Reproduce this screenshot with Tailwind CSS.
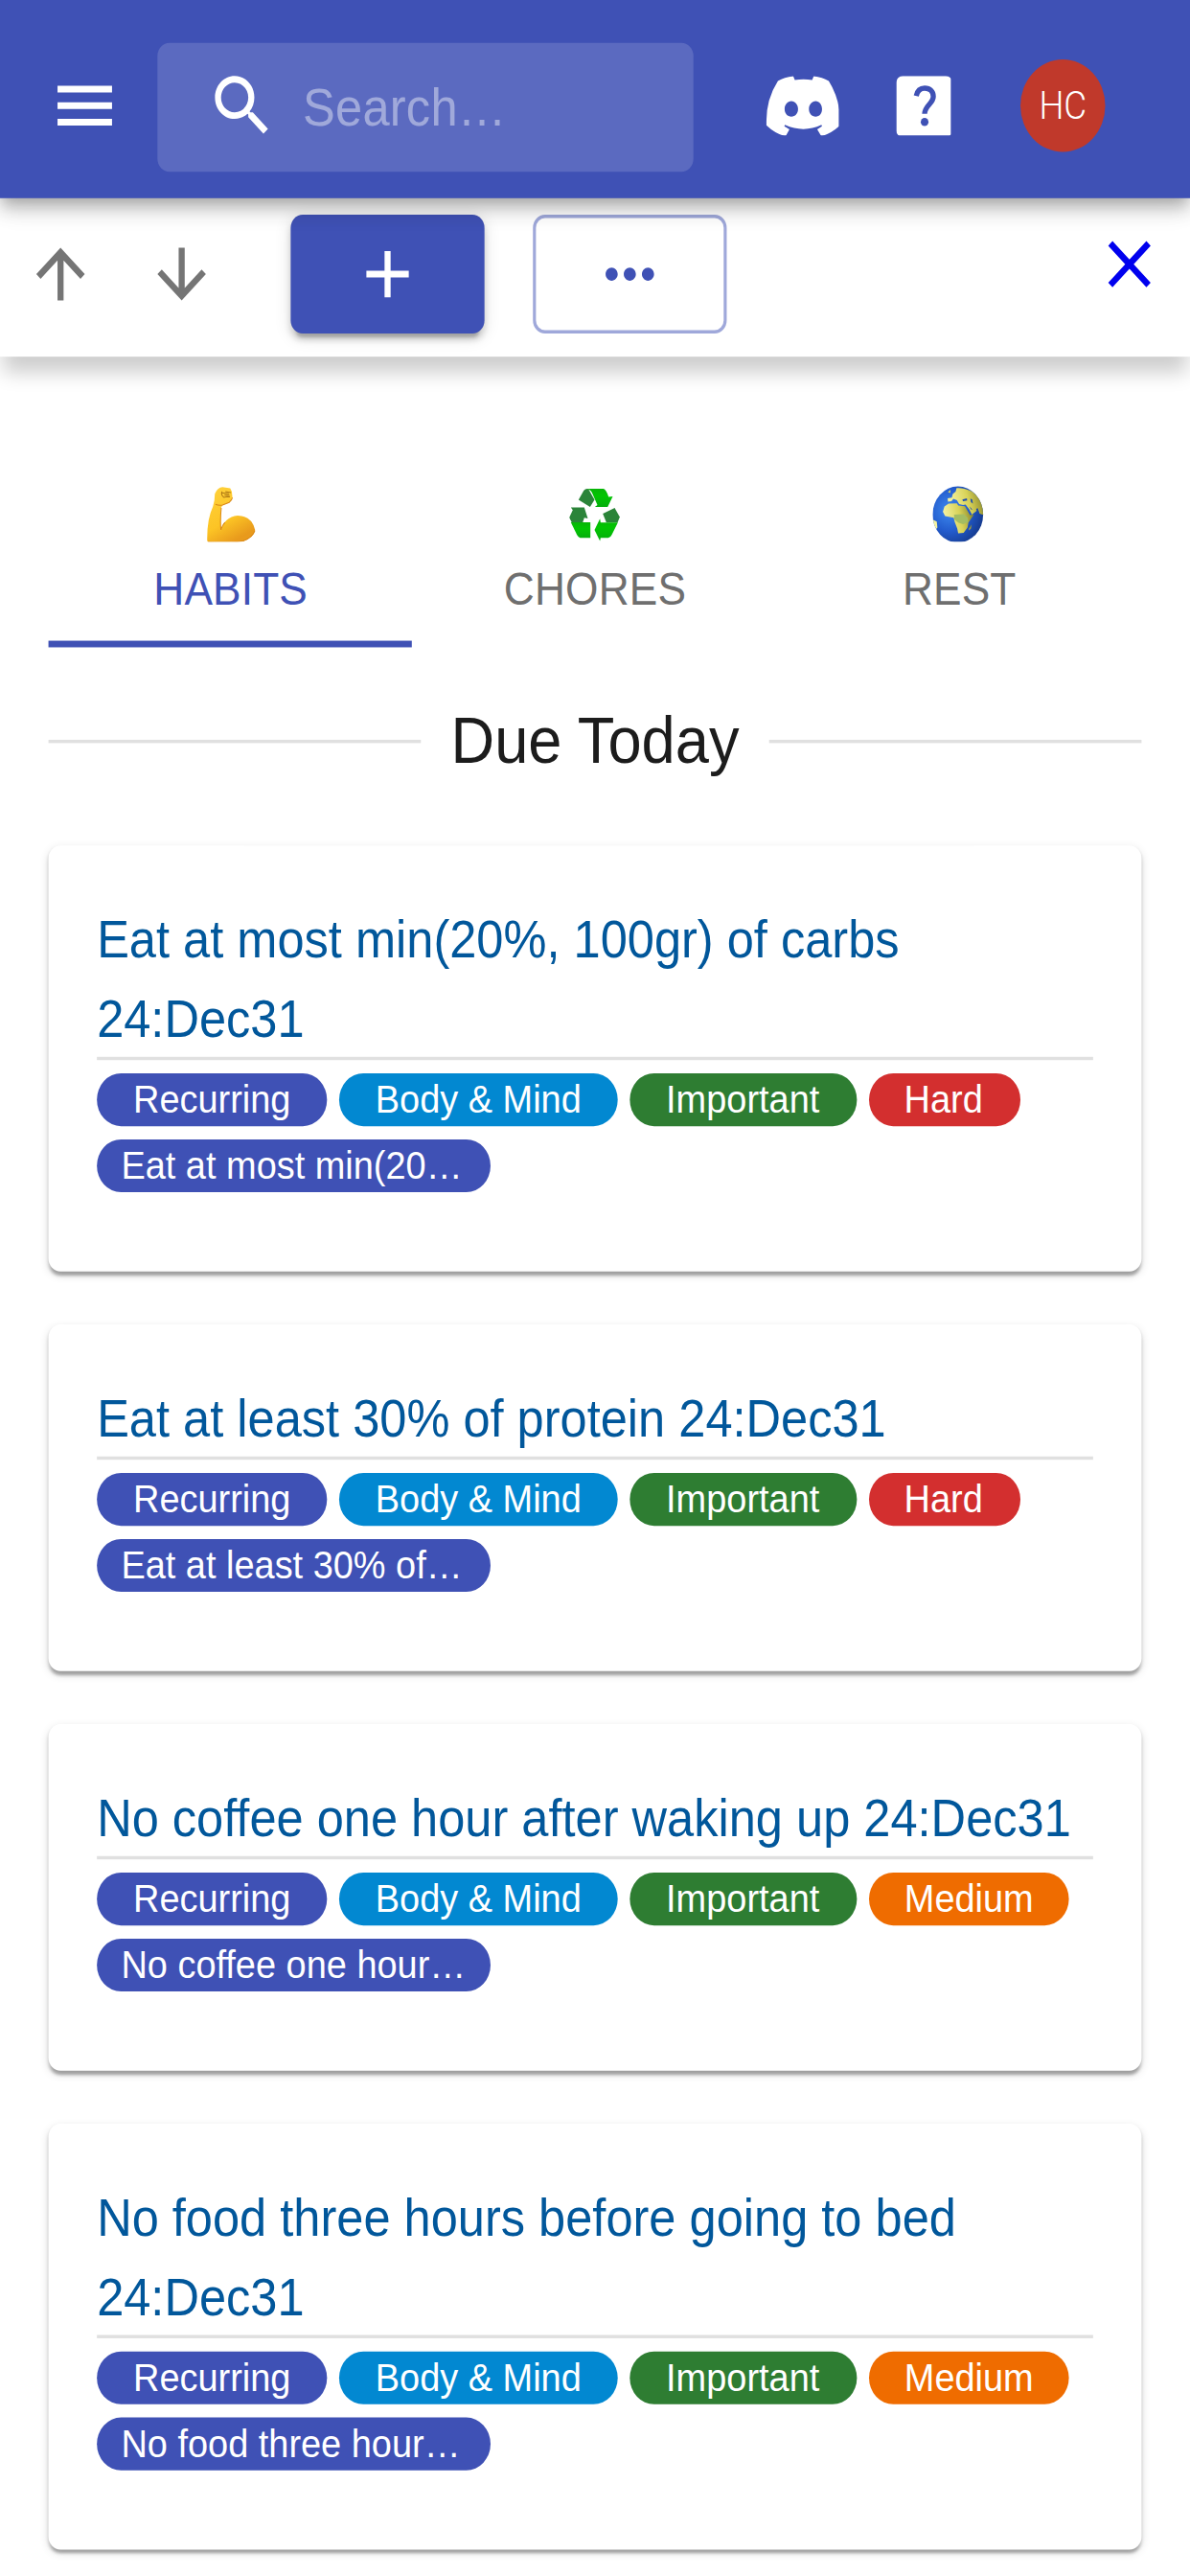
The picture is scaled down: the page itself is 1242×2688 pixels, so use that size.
<!DOCTYPE html>
<html lang="en">
<head>
<meta charset="utf-8">
<title>Habits</title>
<script src="https://cdn.jsdelivr.net/npm/@tailwindcss/browser@4"></script>
</head>
<body class="bg-white overflow-hidden w-[1242px] h-[2688px]">
<div class="w-[393px] h-[780px] origin-top-left scale-x-[3.1603] scale-y-[3.4462] bg-white text-base overflow-hidden font-['Liberation_Sans',Arial,sans-serif]">

  <header class="relative z-20 flex h-[60px] items-center bg-[#3f51b5] pl-4 pr-7 pt-1 text-white shadow-[0_2px_4px_-1px_rgba(0,0,0,0.2),0_4px_5px_0_rgba(0,0,0,0.14),0_1px_10px_0_rgba(0,0,0,0.12)]">
    <svg class="size-6 shrink-0" viewBox="0 0 24 24" fill="currentColor"><path d="M3 18h18v-2H3v2zm0-5h18v-2H3v2zm0-7v2h18V6H3z"/></svg>
    <div class="ml-3 flex h-[39px] w-[177px] items-center rounded bg-white/15 pl-4">
      <svg class="size-6 shrink-0" viewBox="0 0 24 24" fill="currentColor"><path d="M15.5 14h-.79l-.28-.27C15.41 12.59 16 11.11 16 9.5 16 5.91 13.09 3 9.5 3S3 5.91 3 9.5 5.91 16 9.5 16c1.61 0 3.09-.59 4.23-1.57l.27.28v.79l5 4.99L20.49 19l-4.99-5zm-6 0C7.01 14 5 11.99 5 9.5S7.01 5 9.5 5 14 7.01 14 9.5 11.99 14 9.5 14z"/></svg>
      <span class="ml-2 pt-px tracking-[0.08px] text-white/42">Search…</span>
    </div>
    <svg class="ml-[23.7px] h-[18.4px] w-[24.5px] shrink-0" viewBox="236 236 232 191" preserveAspectRatio="none" fill="currentColor"><path fill-rule="evenodd" d="M321 237L326 249Q353 244 380 249L385 237Q412 240 432 252Q470 313 468 391Q441 417 409 426L396 404L411 394L409 390Q353 416 295 390L293 394L309 404L297 426Q264 417 237 391Q234 313 273 252Q293 240 321 237ZM315 315C303 315 294 326 294 340S303 364 315 364S336 354 336 340S327 315 315 315ZM391 315C379 315 370 326 370 340S379 364 391 364S411 354 411 340S403 315 391 315Z"/></svg>
    <svg class="ml-[18.5px] h-[18.5px] w-[18.5px] shrink-0" viewBox="0 0 174 190" preserveAspectRatio="none"><rect width="174" height="190" rx="20" fill="#fff"/><path d="M62 62C66 44 75 38 88 38C105 38 115 49 115 64C115 86 88 92 88 118" fill="none" stroke="#3f51b5" stroke-width="16"/><ellipse cx="88" cy="143" rx="12" ry="13" fill="#3f51b5"/></svg>
    <div class="ml-[23px] flex size-7 shrink-0 items-center justify-center rounded-full bg-[#c0392b] pt-px font-['Roboto',sans-serif] text-[11.6px] font-light">HC</div>
  </header>

  <div class="relative z-10 flex h-12 items-start bg-white pl-2 pr-2 pt-[5px] shadow-[0_6px_6px_-1px_rgba(0,0,0,0.2)]">
    <div class="flex h-9 items-center gap-4 text-[#757575]">
      <svg class="size-6" viewBox="0 0 24 24" fill="currentColor"><path d="M4 12l1.41 1.41L11 7.83V20h2V7.83l5.58 5.59L20 12l-8-8-8 8z"/></svg>
      <svg class="size-6" viewBox="0 0 24 24" fill="currentColor"><path d="M20 12l-1.41-1.41L13 16.17V4h-2v12.17l-5.58-5.59L4 12l8 8 8-8z"/></svg>
    </div>
    <div class="ml-6 flex h-9 w-16 items-center justify-center rounded bg-[#3f51b5] text-white shadow-[0_3px_1px_-2px_rgba(0,0,0,0.2),0_2px_2px_0_rgba(0,0,0,0.14),0_1px_5px_0_rgba(0,0,0,0.12)]">
      <svg class="size-6" viewBox="0 0 24 24" fill="currentColor"><path d="M19 13h-6v6h-2v-6H5v-2h6V5h2v6h6v2z"/></svg>
    </div>
    <div class="ml-4 flex h-9 w-16 items-center justify-center rounded border border-[#3f51b5]/50 text-[#3f51b5]">
      <svg class="size-6" viewBox="0 0 24 24" fill="currentColor"><path d="M6 10c-1.1 0-2 .9-2 2s.9 2 2 2 2-.9 2-2-.9-2-2-2zm12 0c-1.1 0-2 .9-2 2s.9 2 2 2 2-.9 2-2-.9-2-2-2zm-6 0c-1.1 0-2 .9-2 2s.9 2 2 2 2-.9 2-2-.9-2-2-2z"/></svg>
    </div>
    <svg class="ml-auto mt-[3px] size-6 text-[#0000ee]" viewBox="0 0 24 24" fill="currentColor"><path d="M19 6.41L17.59 5 12 10.59 6.41 5 5 6.41 10.59 12 5 17.59 6.41 19 12 13.41 17.59 19 19 17.59 13.41 12z"/></svg>
  </div>

  <main class="px-4 pt-4">
    <nav class="grid h-[72px] grid-cols-3 text-sm leading-[17.5px] tracking-[0.05px] text-[#6f6f6f]">
      <div class="flex flex-col items-center border-b-2 border-[#3f51b5] pt-[22.7px] text-[#3f51b5]">
        <svg class="h-[17.6px] w-[16.7px] shrink-0" viewBox="105 72 158 182" preserveAspectRatio="none">
          <defs><linearGradient id="skin" x1="0" y1="0" x2="0.5" y2="1"><stop offset="0" stop-color="#ffd23c"/><stop offset="0.65" stop-color="#fcc425"/><stop offset="1" stop-color="#e89a1c"/></linearGradient></defs>
          <path d="M109 244Q108 178 127 138Q133 120 133 98Q141 78 157 77L181 81L186 91L188 111L179 125L158 133L153 140Q150 180 152 213Q162 171 204 166Q249 167 259 212Q254 237 219 247Q168 253 111 249Z" fill="url(#skin)"/>
          <path d="M153 142Q149 184 152 211Q158 194 165 188M111 248Q182 254 221 246Q250 236 258 214M135 131Q145 135 157 133L178 125Q187 117 188 110" fill="none" stroke="#d98716" stroke-width="3"/>
          <path d="M155 91Q152 103 161 109L171 107L180 108M156 95L177 98M166 91L183 94M163 102L179 103" fill="none" stroke="#ad7614" stroke-width="3"/>
        </svg>
        <span class="mt-[6.1px]">HABITS</span>
      </div>
      <div class="flex flex-col items-center pt-[22.7px]">
        <svg class="h-[17.6px] w-[16.7px] shrink-0" viewBox="72 74 158 182" preserveAspectRatio="none">
          <defs><linearGradient id="leaf" x1="0" y1="0" x2="0" y2="1"><stop offset="0" stop-color="#08b408"/><stop offset="0.4" stop-color="#02c502"/><stop offset="1" stop-color="#04ae0c"/></linearGradient></defs>
          <path d="M101 119L117 90Q123 83 132 85L151 119L137 141Z" fill="#2b8439"/>
          <path d="M124 84H178Q187 84 195 110L208 108L192 141H152L160 135L143 96Q137 85 124 84Z" fill="url(#leaf)"/>
          <path d="M77 143H119L130 177L119 175L114 190H80L72 174L83 151Z" fill="#2b8439"/>
          <path d="M77 189H138V238H106Q100 236 96 228Z" fill="url(#leaf)"/>
          <path d="M177 162L214 144L230 173L223 190H188Z" fill="#2b8439"/>
          <path d="M151 213L168 178L170 190H224L205 228Q201 237 194 238H170L168 248Z" fill="url(#leaf)"/>
        </svg>
        <span class="mt-[6.1px]">CHORES</span>
      </div>
      <div class="flex flex-col items-center pt-[22.7px]">
        <svg class="h-[17.6px] w-[16.7px] shrink-0" viewBox="71 72 158 182" preserveAspectRatio="none">
          <defs>
            <radialGradient id="sea" cx="0.33" cy="0.42" r="0.68"><stop offset="0" stop-color="#3f8cf0"/><stop offset="0.55" stop-color="#235cce"/><stop offset="1" stop-color="#163c91"/></radialGradient>
            <linearGradient id="land" x1="0" y1="0.2" x2="1" y2="0"><stop offset="0" stop-color="#f4f2a0"/><stop offset="0.5" stop-color="#d8d257"/><stop offset="1" stop-color="#77761f"/></linearGradient>
            <clipPath id="disc"><ellipse cx="150" cy="163" rx="79" ry="88"/></clipPath>
          </defs>
          <ellipse cx="150" cy="163" rx="79" ry="88" fill="url(#sea)"/>
          <g clip-path="url(#disc)" fill="url(#land)">
            <path d="M119 123L118 112L131 110L134 99L143 91L146 80Q165 78 190 89Q230 110 232 165L218 160L212 143L207 145L209 151L194 163L185 146L174 132L166 133L154 130L147 118L136 114L130 121Z"/>
            <path d="M103 154L108 138L121 129L147 128L151 135L172 137L180 151L188 165L200 163L183 188L180 204L168 220L151 222L148 207L140 186L137 173L110 168Z"/>
            <path d="M69 178L84 185L86 204L79 212L69 190ZM184 208L193 194L191 207L185 213ZM119 93L127 85L126 96Z"/>
            <path d="M138 163L169 162L180 174L182 187L166 193L151 188L139 178Z" fill="#a4bd62"/>
            <path d="M164 116L178 112L179 119L166 121ZM189 113L195 116L197 129L191 124ZM187 137L196 149L190 146Z" fill="#1f4dab"/>
          </g>
        </svg>
        <span class="mt-[6.1px]">REST</span>
      </div>
    </nav>

    <div class="mt-3 flex h-8 items-center gap-[10px]">
      <div class="h-px grow bg-[#e0e0e0]"></div>
      <h2 class="text-xl leading-8 text-[#1c1c1c]">Due Today</h2>
      <div class="h-px grow bg-[#e0e0e0]"></div>
    </div>

    <div class="mt-4 flex flex-col gap-4 text-xs leading-4 text-white">
      <article class="rounded bg-white px-4 pb-6 pt-4 shadow-[0_2px_1px_-1px_rgba(0,0,0,0.2),0_1px_1px_0_rgba(0,0,0,0.14),0_1px_3px_0_rgba(0,0,0,0.12)]">
        <h3 class="h-[49px] border-b border-[#e0e0e0] pt-px text-base leading-6 text-[#01579b]">Eat at most min(20%, 100gr) of carbs<br>24:Dec31</h3>
        <div class="mt-1 flex gap-1 text-center">
          <span class="w-[76px] rounded-lg bg-[#3f51b5]">Recurring</span>
          <span class="w-[92px] rounded-lg bg-[#0288d1]">Body &amp; Mind</span>
          <span class="w-[74.6px] rounded-lg bg-[#2e7d32]">Important</span>
          <span class="w-[50px] rounded-lg bg-[#d32f2f]">Hard</span>
        </div>
        <div class="mt-1 w-[130px] rounded-lg bg-[#3f51b5] pl-2">Eat at most min(20…</div>
      </article>
      <article class="rounded bg-white px-4 pb-6 pt-4 shadow-[0_2px_1px_-1px_rgba(0,0,0,0.2),0_1px_1px_0_rgba(0,0,0,0.14),0_1px_3px_0_rgba(0,0,0,0.12)]">
        <h3 class="h-[25px] border-b border-[#e0e0e0] pt-px text-base leading-6 text-[#01579b]">Eat at least 30% of protein 24:Dec31</h3>
        <div class="mt-1 flex gap-1 text-center">
          <span class="w-[76px] rounded-lg bg-[#3f51b5]">Recurring</span>
          <span class="w-[92px] rounded-lg bg-[#0288d1]">Body &amp; Mind</span>
          <span class="w-[74.6px] rounded-lg bg-[#2e7d32]">Important</span>
          <span class="w-[50px] rounded-lg bg-[#d32f2f]">Hard</span>
        </div>
        <div class="mt-1 w-[130px] rounded-lg bg-[#3f51b5] pl-2">Eat at least 30% of…</div>
      </article>
      <article class="rounded bg-white px-4 pb-6 pt-4 shadow-[0_2px_1px_-1px_rgba(0,0,0,0.2),0_1px_1px_0_rgba(0,0,0,0.14),0_1px_3px_0_rgba(0,0,0,0.12)]">
        <h3 class="h-[25px] whitespace-nowrap border-b border-[#e0e0e0] pt-px text-base leading-6 text-[#01579b]">No coffee one hour after waking up 24:Dec31</h3>
        <div class="mt-1 flex gap-1 text-center">
          <span class="w-[76px] rounded-lg bg-[#3f51b5]">Recurring</span>
          <span class="w-[92px] rounded-lg bg-[#0288d1]">Body &amp; Mind</span>
          <span class="w-[74.6px] rounded-lg bg-[#2e7d32]">Important</span>
          <span class="w-[66.8px] rounded-lg bg-[#ef6c00]">Medium</span>
        </div>
        <div class="mt-1 w-[130px] rounded-lg bg-[#3f51b5] pl-2">No coffee one hour…</div>
      </article>
      <article class="rounded bg-white px-4 pb-6 pt-4 shadow-[0_2px_1px_-1px_rgba(0,0,0,0.2),0_1px_1px_0_rgba(0,0,0,0.14),0_1px_3px_0_rgba(0,0,0,0.12)]">
        <h3 class="h-[49px] border-b border-[#e0e0e0] pt-px text-base leading-6 text-[#01579b]">No food three hours before going to bed<br>24:Dec31</h3>
        <div class="mt-1 flex gap-1 text-center">
          <span class="w-[76px] rounded-lg bg-[#3f51b5]">Recurring</span>
          <span class="w-[92px] rounded-lg bg-[#0288d1]">Body &amp; Mind</span>
          <span class="w-[74.6px] rounded-lg bg-[#2e7d32]">Important</span>
          <span class="w-[66.8px] rounded-lg bg-[#ef6c00]">Medium</span>
        </div>
        <div class="mt-1 w-[130px] rounded-lg bg-[#3f51b5] pl-2">No food three hour…</div>
      </article>
    </div>
  </main>
</div>
</body>
</html>
